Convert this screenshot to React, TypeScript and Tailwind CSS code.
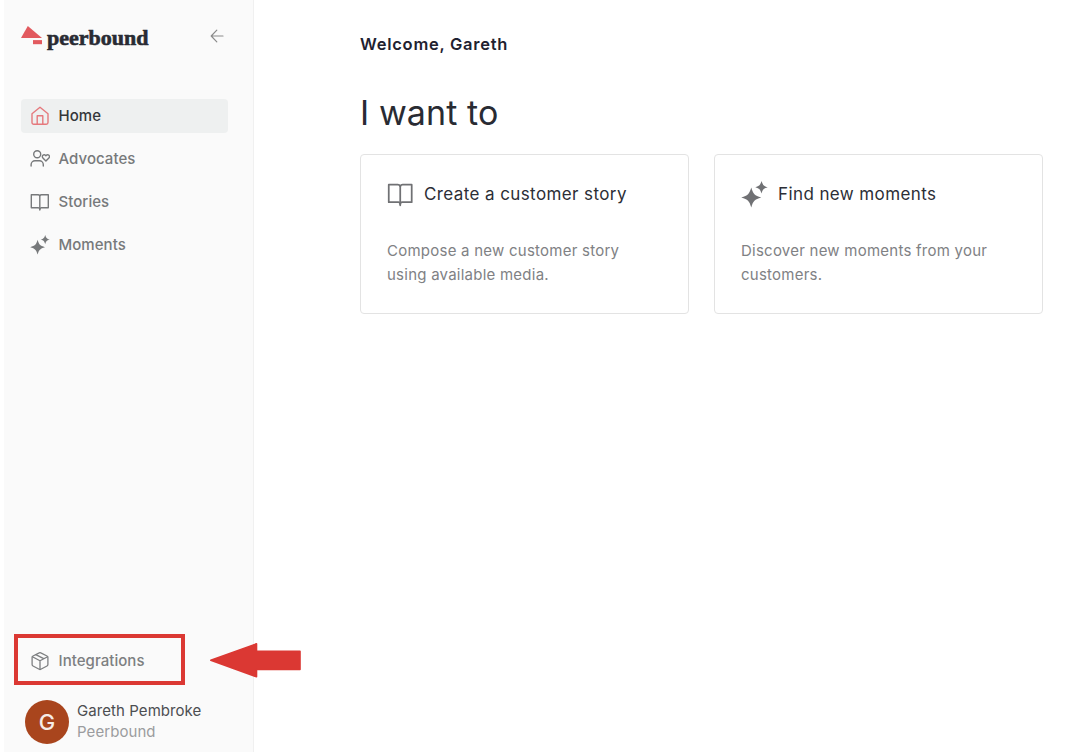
import type { ReactNode } from "react"
import { clsx } from "clsx"

type IconProps = { className?: string; strokeWidth?: number }

function HomeIcon({ className }: IconProps) {
    return (
        <svg viewBox="0 0 20 20" fill="none" stroke="currentColor" strokeWidth="1.4" strokeLinejoin="round" strokeLinecap="round" className={className}>
            <path d="M2 7.7 10 1.2l8 6.5v8.8a1.7 1.7 0 0 1-1.7 1.7H3.7A1.7 1.7 0 0 1 2 16.5z" />
            <path d="M7.2 18.1V9.8h5.6v8.3" />
        </svg>
    )
}

function AdvocatesIcon({ className }: IconProps) {
    return (
        <svg viewBox="0 0 20 20" fill="none" stroke="currentColor" strokeWidth="1.4" strokeLinejoin="round" strokeLinecap="round" className={className}>
            <circle cx="7.2" cy="5.3" r="3.5" />
            <path d="M1.1 17v-1.3a3.9 3.9 0 0 1 3.9-3.9h4.4a3.9 3.9 0 0 1 3.9 3.9V17" />
            <path d="m15.9 12-3-3.1a1.75 1.75 0 0 1 0-2.6 1.9 1.9 0 0 1 2.6 0l.4.5.4-.5a1.9 1.9 0 0 1 2.6 0 1.75 1.75 0 0 1 0 2.6z" />
        </svg>
    )
}

function BookIcon({ className, strokeWidth = 1.4 }: IconProps) {
    return (
        <svg viewBox="0 0 20 20" fill="none" stroke="currentColor" strokeWidth={strokeWidth} strokeLinejoin="round" strokeLinecap="round" className={className}>
            <path d="M9.8 3.8a2 2 0 0 0-1.8-1.1H1.3v13h7a1.6 1.6 0 0 1 1.5 1.6 1.6 1.6 0 0 1 1.5-1.6h7v-13h-6.7a2 2 0 0 0-1.8 1.1z" />
            <path d="M9.8 3.8V18" />
        </svg>
    )
}

function SparklesIcon({ className }: IconProps) {
    return (
        <svg viewBox="0 0 20 20" fill="currentColor" className={className}>
            <path d="M7.6 4.8c1.5 5 2.4 5.9 7.4 7.4-5 1.5-5.9 2.4-7.4 7.4-1.5-5-2.4-5.9-7.4-7.4 5-1.5 5.9-2.4 7.4-7.4z" />
            <path d="M15.2 0c1 3.1 1.5 3.6 4.6 4.6-3.1 1-3.6 1.5-4.6 4.6-1-3.1-1.5-3.6-4.6-4.6 3.1-1 3.6-1.5 4.6-4.6z" />
        </svg>
    )
}

function BoxIcon({ className }: IconProps) {
    return (
        <svg viewBox="0 0 20 20" fill="none" stroke="currentColor" strokeWidth="1.3" strokeLinejoin="round" strokeLinecap="round" className={className}>
            <path d="M9.2 1.9 3 5a1.6 1.6 0 0 0-.9 1.4v7.2A1.6 1.6 0 0 0 3 15l6.2 3.3a1.6 1.6 0 0 0 1.6 0L17 15a1.6 1.6 0 0 0 .9-1.4V6.4A1.6 1.6 0 0 0 17 5l-6.2-3.1a1.6 1.6 0 0 0-1.6 0z" />
            <path d="M2.4 5.7 10 9.8l7.6-4.1M10 9.8v8.6M5.8 3.6l7.9 4.1" />
        </svg>
    )
}

const navItems = [
    { label: "Home", icon: HomeIcon, active: true },
    { label: "Advocates", icon: AdvocatesIcon },
    { label: "Stories", icon: BookIcon },
    { label: "Moments", icon: SparklesIcon },
]

function Logo() {
    return (
        <div className="flex items-start">
            <svg viewBox="0 0 22 20" className="mt-[1px] h-5 w-[22px]">
                <path d="M6.8 0 21 12H0z" fill="#e25a5f" />
                <path d="M12 14.1h9v4.1h-9z" fill="#e25a5f" />
            </svg>
            <span className="ml-1 font-['Liberation_Serif',serif] text-[22px] font-bold leading-[26px] text-[#292b33] [-webkit-text-stroke:0.6px_#292b33]">peerbound</span>
        </div>
    )
}

function Sidebar() {
    return (
        <aside className="flex w-[250px] shrink-0 flex-col border-r border-[#f0f0f0] bg-[#fafafa]">
            <div className="flex items-start justify-between pl-[17px] pr-[29px] pt-[25px]">
                <Logo />
                <svg viewBox="0 0 14 14" fill="none" stroke="#8b8b8b" strokeWidth="1.2" strokeLinecap="round" strokeLinejoin="round" className="mt-[4px] size-[14px]">
                    <path d="M13 7H1.2M6.8 1.2 1.2 7l5.6 5.8" />
                </svg>
            </div>
            <nav className="mt-12 flex flex-col gap-[9px] pl-[17px] pr-[25px]">
                {navItems.map(({ label, icon: Icon, active }) => (
                    <a key={label} className={clsx("flex h-[34px] items-center rounded-[4px] pl-[9px]", active ? "bg-[#eef0f0] text-[#35373a]" : "text-[#77797b]")}>
                        <Icon className={clsx("size-5", active && "text-[#e5797d]")} />
                        <span className="ml-[8.5px] text-[15px] font-medium tracking-[0.05px]">{label}</span>
                    </a>
                ))}
            </nav>
            <div className="mb-[8px] mt-auto">
                <div className="ml-[10px] flex h-[51px] w-[171px] items-center border-4 border-[#db3833] pl-[12px] text-[#7d7f81]">
                    <BoxIcon className="mt-[3px] size-5" />
                    <span className="ml-[8.5px] pt-[3px] text-[15px] font-medium tracking-[0.05px]">Integrations</span>
                </div>
                <div className="mt-[15px] flex items-center pl-[21px]">
                    <div className="flex size-11 items-center justify-center rounded-full bg-[#a9451d] text-[22px] font-medium text-[#f6ece7]">G</div>
                    <div className="-mt-[2px] ml-2 text-[15px] leading-[21px] tracking-[0.07px]">
                        <p className="text-[#4c4e51]">Gareth Pembroke</p>
                        <p className="text-[#9b9c9e]">Peerbound</p>
                    </div>
                </div>
            </div>
        </aside>
    )
}

function ActionCard({ icon, title, children }: { icon: ReactNode; title: string; children: ReactNode }) {
    return (
        <div className="h-[160px] w-[329px] rounded-[4px] border border-[#e3e3e3] pl-[26px] pt-[25px]">
            <div className="flex h-7 items-center text-[#707174]">
                {icon}
                <h2 className="ml-[10px] pt-[2px] text-[17px] tracking-[0.4px] text-[#2c2e36]">{title}</h2>
            </div>
            <p className="mt-[31px] text-[15px] leading-6 tracking-[0.24px] text-[#808184]">{children}</p>
        </div>
    )
}

export default function App() {
    return (
        <div className="flex h-[752px] w-[1070px] overflow-hidden bg-white pl-1 font-['Inter',sans-serif]">
            <Sidebar />
            <main className="relative flex-1 pl-[106px] pt-[34px]">
                <p className="text-[16.5px] font-semibold leading-5 tracking-[0.73px] text-[#1f2230]">Welcome, Gareth</p>
                <h1 className="mt-[37px] text-[34px] leading-11 tracking-[0.1px] text-[#292b33]">I want to</h1>
                <div className="mt-[19px] flex gap-[25px]">
                    <ActionCard icon={<BookIcon className="size-[27px]" strokeWidth={1.3} />} title="Create a customer story">
                        Compose a new customer story<br />using available media.
                    </ActionCard>
                    <ActionCard icon={<SparklesIcon className="size-[27px]" />} title="Find new moments">
                        Discover new moments from your<br />customers.
                    </ActionCard>
                </div>
                {/* callout pointing at Integrations */}
                <svg viewBox="0 0 92 36" className="absolute -left-[44px] top-[642px] h-9 w-[92px]">
                    <path d="M.8 18.3 46.5 1.8v7.5H90V27.5H46.5v7.3z" fill="#db3833" stroke="#db3833" strokeWidth="1.6" strokeLinejoin="round" />
                </svg>
            </main>
        </div>
    )
}
